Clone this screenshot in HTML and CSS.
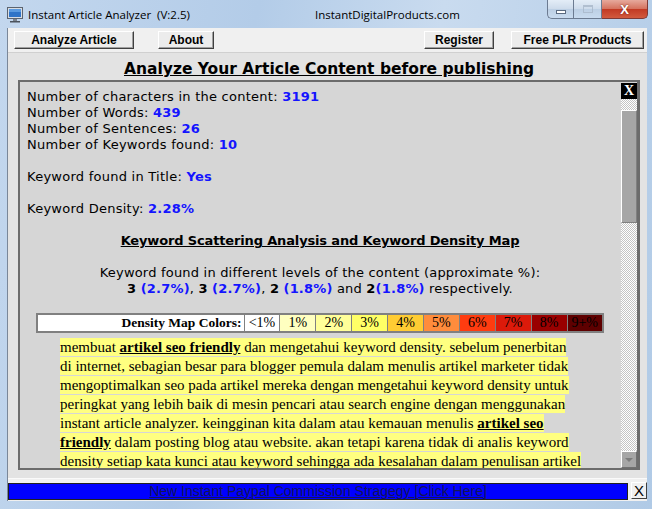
FILE: index.html
```html
<!DOCTYPE html>
<html lang="en">
  <head>
    <meta charset="UTF-8" />
    <title>Instant Article Analyzer</title>
    <link rel="stylesheet" href="styles.css">
  </head>
  <body>
    <div class="window">
      <div class="titlebar">
        <svg class="app-icon" width="16" height="16" viewBox="0 0 16 16">
          <rect x="0.5" y="0.5" width="15" height="11" fill="#d8dde4" stroke="#5c6470" />
          <rect x="2" y="2" width="12" height="8" fill="#2f74c8" />
          <rect x="2" y="2" width="12" height="3" fill="#5a9ae0" />
          <rect x="6" y="12" width="4" height="2" fill="#7a828c" />
          <rect x="3" y="14" width="10" height="1.5" fill="#4b525c" />
        </svg>
        <span class="title">Instant Article Analyzer&nbsp; (V:2.5)</span>
        <span class="site">InstantDigitalProducts.com</span>
        <div class="controls">
          <div class="ctl ctl-min"><span class="min-bar"></span></div>
          <div class="ctl ctl-max"><span class="max-box"></span></div>
          <div class="ctl ctl-close">X</div>
        </div>
      </div>

      <div class="client">
        <div class="toolbar">
          <button class="tool-btn btn-analyze">Analyze Article</button>
          <button class="tool-btn btn-about">About</button>
          <button class="tool-btn btn-register">Register</button>
          <button class="tool-btn btn-plr">Free PLR Products</button>
        </div>

        <div class="panel">
          <h1 class="heading">Analyze Your Article Content before publishing</h1>
          <div class="report">
            <div class="report-body">
              <p>Number of characters in the content: <b class="val">3191</b></p>
              <p>Number of Words: <b class="val">439</b></p>
              <p>Number of Sentences: <b class="val">26</b></p>
              <p>Number of Keywords found: <b class="val">10</b></p>
              <p class="gap">Keyword found in Title: <b class="val">Yes</b></p>
              <p class="gap">Keyword Density: <b class="val">2.28%</b></p>

              <h2 class="sub-heading">Keyword Scattering Analysis and Keyword Density Map</h2>
              <p class="levels">Keyword found in different levels of the content (approximate %):<br>
                <b>3</b> <b class="val">(2.7%)</b>, <b>3</b> <b class="val">(2.7%)</b>, <b>2</b> <b class="val">(1.8%)</b> and <b>2</b><b class="val">(1.8%)</b> respectively.</p>

              <table class="density">
                <tr>
                  <th>Density Map Colors:</th>
                  <td class="d0">&lt;1%</td>
                  <td class="d1">1%</td>
                  <td class="d2">2%</td>
                  <td class="d3">3%</td>
                  <td class="d4">4%</td>
                  <td class="d5">5%</td>
                  <td class="d6">6%</td>
                  <td class="d7">7%</td>
                  <td class="d8">8%</td>
                  <td class="d9">9+%</td>
                </tr>
              </table>

              <div class="article">
                <span class="mark">membuat <b class="kw">artikel seo friendly</b> dan mengetahui keyword density. sebelum penerbitan</span><br>
                <span class="mark">di internet, sebagian besar para blogger pemula dalam menulis artikel marketer tidak</span><br>
                <span class="mark">mengoptimalkan seo pada artikel mereka dengan mengetahui keyword density untuk</span><br>
                <span class="mark">peringkat yang lebih baik di mesin pencari atau search engine dengan menggunakan</span><br>
                <span class="mark">instant article analyzer. keingginan kita dalam atau kemauan menulis <b class="kw">artikel seo</b></span><br>
                <span class="mark"><b class="kw">friendly</b> dalam posting blog atau website. akan tetapi karena tidak di analis keyword</span><br>
                <span class="mark">density setiap kata kunci atau keyword sehingga ada kesalahan dalam penulisan artikel</span>
              </div>
            </div>

            <div class="scrollbar">
              <div class="sb-close">X</div>
              <div class="sb-track">
                <div class="sb-thumb"></div>
              </div>
              <div class="sb-down"><span class="arrow"></span></div>
            </div>
          </div>
        </div>

        <div class="promo-row">
          <a class="promo" href="#">New Instant Paypal Commission Stragegy [Click Here]</a>
          <button class="promo-close">X</button>
        </div>
      </div>
    </div>
  </body>
</html>
```

FILE: styles.css
```css
* {
  margin: 0;
  padding: 0;
  box-sizing: border-box;
}
body {
  width: 652px;
  height: 509px;
  overflow: hidden;
  font-family: "DejaVu Sans", Verdana, sans-serif;
  background: linear-gradient(100deg, #c3d7ee 0%, #b3cce8 35%, #c9dbef 60%, #b0cae6 100%);
}
.window {
  height: 509px;
  display: flex;
  flex-direction: column;
}

/* title bar */
.titlebar {
  height: 28px;
  display: flex;
  align-items: center;
  padding-left: 7px;
  position: relative;
}
.app-icon {
  margin-top: 1px;
}
.title {
  margin-left: 5px;
  font-family: "Open Sans", "Noto Sans", sans-serif;
  font-size: 11.5px;
  color: #000;
}
.site {
  margin-left: 125px;
  font-family: "Open Sans", "Noto Sans", sans-serif;
  font-size: 11.5px;
  color: #000;
}
.controls {
  position: absolute;
  top: 0;
  right: 4px;
  display: flex;
}
.ctl {
  height: 19px;
  border: 1px solid #6c7b91;
  border-top: none;
  display: flex;
  align-items: center;
  justify-content: center;
}
.ctl-min {
  width: 26px;
  border-radius: 0 0 0 5px;
  border-right: none;
  background: linear-gradient(#e4edf7 0%, #cddbeb 50%, #bccfe4 51%, #c9dbef 100%);
}
.ctl-max {
  width: 29px;
  background: linear-gradient(#e4edf7 0%, #cddbeb 50%, #bccfe4 51%, #c9dbef 100%);
}
.min-bar {
  width: 10px;
  height: 4px;
  margin-top: 5px;
  background: #fff;
  border: 1px solid #5a6a80;
}
.max-box {
  width: 10px;
  height: 8px;
  border: 1px solid #a8b6c8;
  border-top-width: 2px;
  opacity: 0.8;
}
.ctl-close {
  width: 46px;
  border-left: none;
  border-radius: 0 0 5px 0;
  border-color: #7e3a36;
  background: linear-gradient(#e6a99c 0%, #d5735f 48%, #c23a24 52%, #d25a3e 100%);
  color: #fff;
  font-family: "Liberation Sans", Arial, sans-serif;
  font-weight: bold;
  font-size: 13px;
  text-shadow: 0 0 2px #6b1a10;
}

/* client area */
.client {
  flex: 1;
  margin: 0 5px 8px 7px;
  background: #f0f0f0;
  border-left: 1px solid #7a8799;
  display: flex;
  flex-direction: column;
}
.toolbar {
  height: 24px;
  padding: 3px 3px 0 6px;
  display: flex;
  align-items: flex-start;
}
.tool-btn {
  height: 18px;
  font-family: "Liberation Sans", Arial, sans-serif;
  font-weight: bold;
  font-size: 12px;
  color: #000;
  background: #ececec;
  border: 1px solid;
  border-color: #fff #404040 #404040 #fff;
  box-shadow: inset -1px -1px 0 #a0a0a0;
}
.btn-analyze {
  width: 120px;
}
.btn-about {
  width: 56px;
  margin-left: 24px;
}
.btn-register {
  width: 70px;
  margin-left: auto;
}
.btn-plr {
  width: 133px;
  margin-left: 17px;
}

/* main panel */
.panel {
  height: 426px;
  padding: 0 7px 8px 10px;
  background: #e3e3e3;
  border-top: 1px solid #d0d0d0;
  display: flex;
  flex-direction: column;
}
.heading {
  height: 27px;
  padding-top: 3px;
  line-height: 26px;
  text-align: center;
  font-size: 15.5px;
  font-weight: bold;
  text-decoration: underline;
  color: #000;
}
.report {
  flex: 1;
  display: flex;
  overflow: hidden;
  background: #d6d6d6;
  border: 2px solid #6c6c6c;
  border-right-width: 3px;
}
.report-body {
  flex: 1;
  overflow: hidden;
  padding: 7px 8px 0 7px;
  font-size: 13px;
  letter-spacing: 0.25px;
  line-height: 16px;
  color: #000;
}
.val {
  color: #1414ff;
}
.gap {
  margin-top: 16px;
}
.sub-heading {
  margin-top: 16px;
  text-align: center;
  font-size: 13px;
  letter-spacing: -0.15px;
  line-height: 16px;
  text-decoration: underline;
}
.levels {
  margin-top: 16px;
  text-align: center;
  letter-spacing: 0.2px;
}

/* density colours */
.density {
  margin: 16px 0 0 9px;
  width: 568px;
  height: 20px;
  table-layout: fixed;
  border-collapse: collapse;
  border: 2px solid #808080;
  font-family: "Liberation Serif", "Times New Roman", serif;
  font-size: 14px;
  letter-spacing: 0;
}
.density th,
.density td {
  border: 1px solid #808080;
  text-align: center;
  padding: 0;
  height: 18px;
}
.density th {
  width: 207px;
  text-align: right;
  padding-right: 2px;
  font-size: 13.5px;
  background: #fff;
}
.d0 { background: #ffffff; }
.d1 { background: #ffffc0; }
.d2 { background: #ffff99; }
.d3 { background: #ffff66; }
.d4 { background: #ffcc33; }
.d5 { background: #ff8c3c; }
.d6 { background: #ff3c10; }
.d7 { background: #dc1a0a; }
.d8 { background: #990000; }
.d9 { background: #5e0000; }

/* article text */
.article {
  margin: 5px 0 0 33px;
  font-family: "Liberation Serif", "Times New Roman", serif;
  font-size: 15px;
  letter-spacing: 0;
  line-height: 19px;
  white-space: nowrap;
}
.mark {
  background: #ffff80;
  padding: 1px 0;
}
.kw {
  text-decoration: underline;
}

/* scrollbar */
.scrollbar {
  width: 16px;
  display: flex;
  flex-direction: column;
}
.sb-close {
  height: 16px;
  margin-top: 1px;
  background: #000;
  color: #fff;
  font-family: "Liberation Serif", serif;
  font-weight: bold;
  font-size: 14px;
  line-height: 16px;
  text-align: center;
}
.sb-track {
  flex: 1;
  padding-top: 11px;
  background: repeating-conic-gradient(#ffffff 0 25%, #c4c4c4 0 50%) 0 0 / 2px 2px;
}
.sb-thumb {
  height: 113px;
  background: #a6a6a6;
  border: 1px solid #fff;
  border-right-color: #808080;
  border-bottom-color: #808080;
}
.sb-down {
  height: 17px;
  background: #a6a6a6;
  border: 1px solid #fff;
  border-right-color: #707070;
  border-bottom-color: #707070;
  display: flex;
  align-items: center;
  justify-content: center;
}
.arrow {
  width: 0;
  height: 0;
  border-left: 4px solid transparent;
  border-right: 4px solid transparent;
  border-top: 4px solid #7c7c7c;
}

/* promo bar */
.promo-row {
  flex: 1;
  display: flex;
  align-items: flex-start;
  padding-top: 4px;
  border-top: 1px solid #fafafa;
}
.promo {
  width: 620px;
  height: 17px;
  background: #0000ff;
  border: 1px solid #202020;
  color: #14145a;
  font-family: "Liberation Sans", Arial, sans-serif;
  font-size: 14px;
  line-height: 15px;
  text-align: center;
}
.promo-close {
  width: 16px;
  height: 17px;
  margin: -1px 0 0 3px;
  background: #f0f0f0;
  border: 1px solid;
  border-color: #fff #404040 #404040 #fff;
  font-family: "Liberation Sans", Arial, sans-serif;
  font-size: 15px;
  line-height: 14px;
  color: #000;
}
```
